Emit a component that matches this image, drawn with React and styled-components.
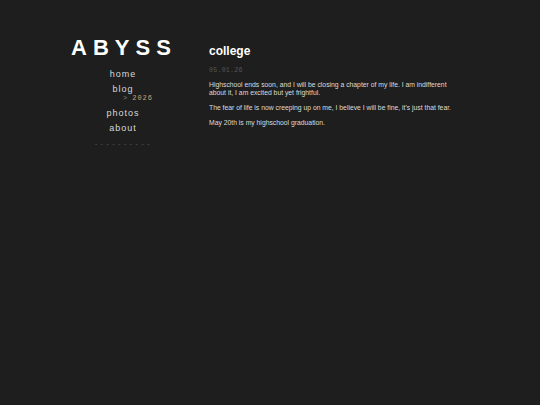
import React from 'react'
import styled, { createGlobalStyle } from 'styled-components'

const Global = createGlobalStyle`
  html, body {
    margin: 0;
    padding: 0;
    background: #1e1e1e;
    font-family: "Liberation Sans", Arial, sans-serif;
  }
`

const Page = styled.div`
  display: flex;
  align-items: flex-start;
  padding: 36px 0 0 60px;
  min-height: 369px;
`

const Sidebar = styled.aside`
  width: 126px;
  display: flex;
  flex-direction: column;
  align-items: center;
`

const Logo = styled.h1`
  margin: 0 0 7px 2px;
  font-size: 22px;
  font-weight: bold;
  letter-spacing: 6px;
  color: #fff;
  line-height: 24px;
`

const Nav = styled.nav`
  display: flex;
  flex-direction: column;
  align-items: center;
`

const NavLink = styled.a`
  color: #d8d8d8;
  font-size: 9px;
  letter-spacing: 1px;
  line-height: 15px;
  text-decoration: none;
`

const Sub = styled.div`
  margin: -3px 0 3px 30px;
  font-family: "Liberation Mono", monospace;
  font-size: 7px;
  line-height: 9px;
  letter-spacing: 1px;
  color: #c0a878;
`

const Arrow = styled.span`
  color: #808080;
  margin-right: 4px;
`

const Dashes = styled.div`
  margin-top: 4px;
  font-family: "Liberation Mono", monospace;
  font-size: 7px;
  letter-spacing: 1.6px;
  color: #555;
`

const Main = styled.main`
  margin-left: 23px;
  width: 250px;
  padding-top: 8px;
`

const Title = styled.h2`
  margin: 0;
  font-size: 12px;
  font-weight: bold;
  color: #fff;
  line-height: 14px;
`

const Date = styled.div`
  margin: 8px 0 7px;
  font-family: "Liberation Mono", monospace;
  font-size: 6.7px;
  letter-spacing: 0.2px;
  color: #555;
`

const P = styled.p`
  margin: 0 0 7px;
  font-size: 6.8px;
  line-height: 8px;
  color: #dcdcdc;
`

export default function App() {
  return (
    <>
      <Global />
      <Page>
        <Sidebar>
          <Logo>ABYSS</Logo>
          <Nav>
            <NavLink href="#">home</NavLink>
            <NavLink href="#">blog</NavLink>
            <Sub><Arrow>&gt;</Arrow>2026</Sub>
            <NavLink href="#">photos</NavLink>
            <NavLink href="#">about</NavLink>
          </Nav>
          <Dashes>----------</Dashes>
        </Sidebar>
        <Main>
          <Title>college</Title>
          <Date>05.01.26</Date>
          <P>Highschool ends soon, and I will be closing a chapter of my life. I am indifferent about it, I am excited but yet frightful.</P>
          <P>The fear of life is now creeping up on me, I believe I will be fine, it's just that fear.</P>
          <P>May 20th is my highschool graduation.</P>
        </Main>
      </Page>
    </>
  )
}
